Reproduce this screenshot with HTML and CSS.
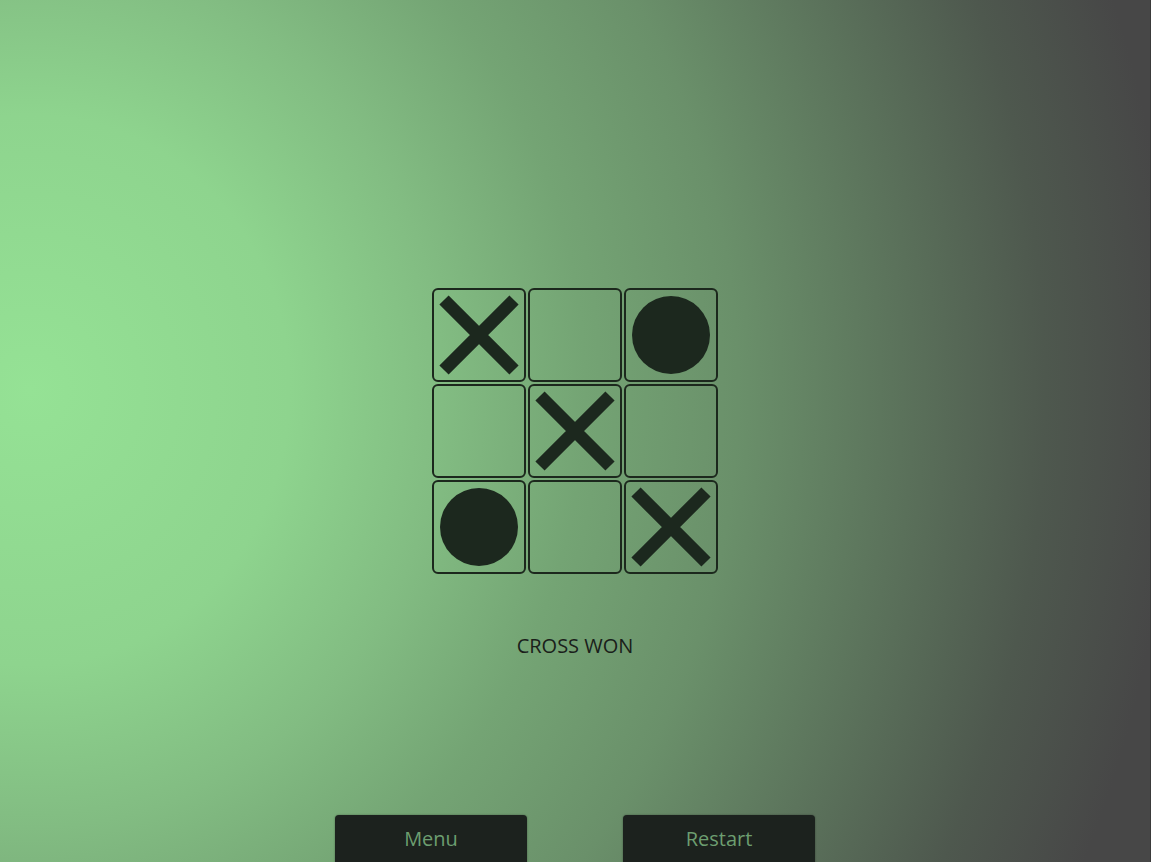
FILE: index.html
```html
<!DOCTYPE html>
<html lang="en">
<head>
<meta charset="utf-8">
<title>Tic Tac Toe</title>
<link rel="stylesheet" href="styles.css">
</head>
<body>
<main class="screen">
  <div class="board">
    <div class="cell"><svg class="mark" viewBox="0 0 94 94"><path d="M12 12 L82 82 M82 12 L12 82"/></svg></div>
    <div class="cell"></div>
    <div class="cell"><svg class="mark" viewBox="0 0 94 94"><circle cx="47" cy="47" r="39"/></svg></div>
    <div class="cell"></div>
    <div class="cell"><svg class="mark" viewBox="0 0 94 94"><path d="M12 12 L82 82 M82 12 L12 82"/></svg></div>
    <div class="cell"></div>
    <div class="cell"><svg class="mark" viewBox="0 0 94 94"><circle cx="47" cy="47" r="39"/></svg></div>
    <div class="cell"></div>
    <div class="cell"><svg class="mark" viewBox="0 0 94 94"><path d="M12 12 L82 82 M82 12 L12 82"/></svg></div>
  </div>
  <p class="status">CROSS WON</p>
  <div class="actions">
    <button class="btn">Menu</button>
    <button class="btn">Restart</button>
  </div>
</main>
</body>
</html>
```
FILE: styles.css
```css
html, body {
  margin: 0;
  padding: 0;
  height: 100%;
  overflow: hidden;
}
body {
  background: radial-gradient(ellipse 1180px 1250px at 30px 390px,
    #95e295 0%,
    #8ed48e 22%,
    #82bc82 35%,
    #74a474 47%,
    #6a906a 60%,
    #5c745c 73%,
    #4e584e 86%,
    #474747 97%);
  font-family: "Open Sans", "Noto Sans", sans-serif;
}
.screen {
  height: 862px;
  box-sizing: border-box;
  padding-top: 288px;
  display: flex;
  flex-direction: column;
  align-items: center;
  border-right: 1px solid #3a3a3a;
}
.board {
  display: grid;
  grid-template-columns: repeat(3, 94px);
  grid-template-rows: repeat(3, 94px);
  gap: 2px;
}
.cell {
  box-sizing: border-box;
  border: 2px solid #1c281d;
  border-radius: 6px;
  position: relative;
}
.mark {
  position: absolute;
  left: -2px;
  top: -2px;
  width: 94px;
  height: 94px;
}
.mark path {
  stroke: #1c281e;
  stroke-width: 13;
  stroke-linecap: butt;
  fill: none;
}
.mark circle {
  fill: #1c281e;
}
.status {
  margin: 60px 0 0;
  height: 24px;
  line-height: 24px;
  font-size: 20px;
  color: #1a201a;
}
.actions {
  margin-top: 157px;
  display: flex;
  gap: 96px;
}
.btn {
  width: 192px;
  height: 60px;
  border: none;
  border-radius: 4px;
  background: #1c221e;
  color: #6c9e70;
  font-family: "Open Sans", "Noto Sans", sans-serif;
  font-size: 20px;
  padding: 0 0 14px;
  box-shadow: 0 0 2px rgba(0,0,0,0.4);
}
```
